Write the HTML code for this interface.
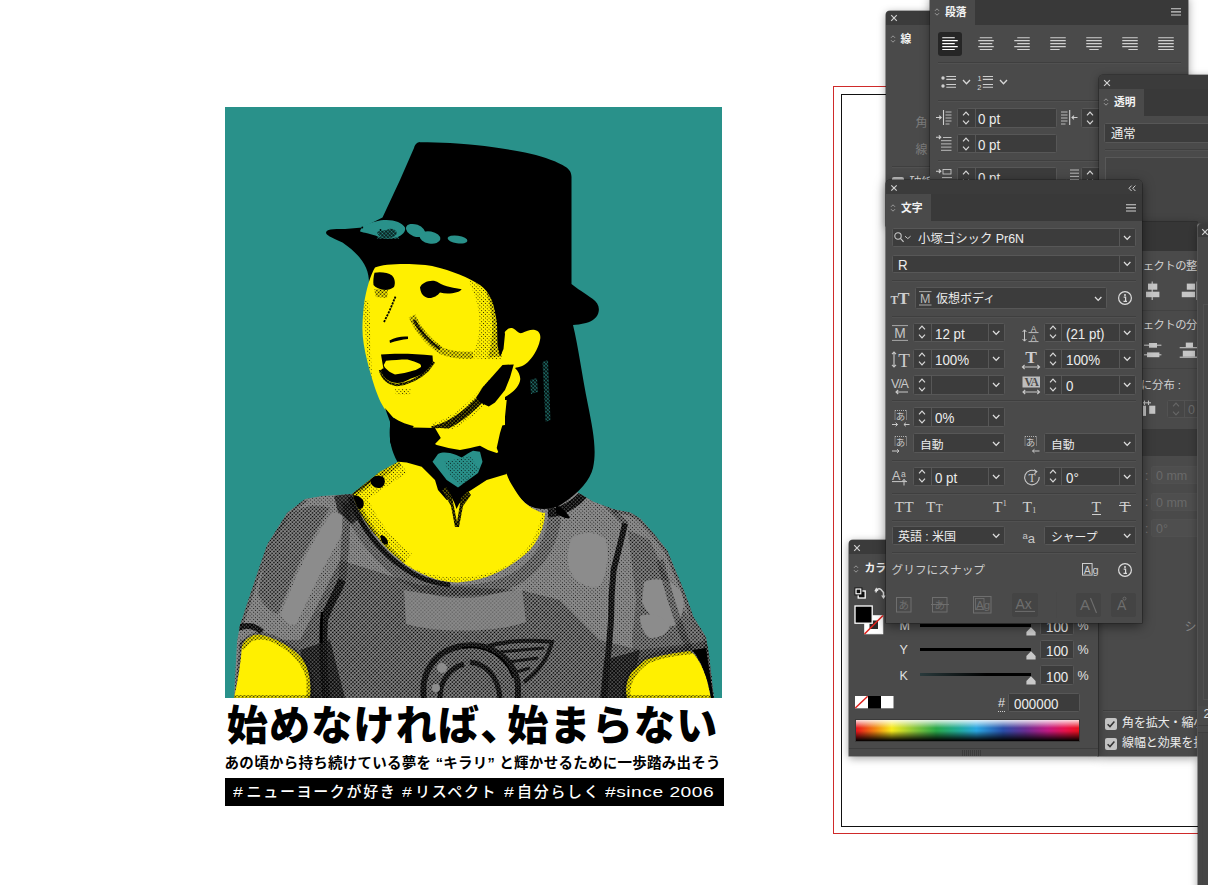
<!DOCTYPE html>
<html lang="ja"><head><meta charset="utf-8"><title>始めなければ、始まらない</title>
<style>
*{box-sizing:border-box}
html,body{margin:0;padding:0}
body{width:1208px;height:885px;position:relative;overflow:hidden;background:#fff;font-family:"Liberation Sans","Noto Sans CJK JP",sans-serif;color:#e4e4e4;font-size:12px;line-height:1}
.a{position:absolute}
.panel{position:absolute;background:#4a4a4a;overflow:hidden}
svg{position:absolute;overflow:visible}
.tg{top:778px;height:28px;font:500 15px/27.5px 'Liberation Sans','Noto Sans CJK JP',sans-serif;color:#fff;white-space:pre;letter-spacing:1.65px}
.hs{display:inline-block;width:13.2px;transform:scaleX(1.18);transform-origin:left center;letter-spacing:0}
</style></head><body>
<!-- ===== poster ===== -->
<svg class="a" style="left:0;top:0" width="1208" height="885" viewBox="0 0 1208 885">
<defs>
<pattern id="h0" width="2.6" height="2.6" patternUnits="userSpaceOnUse" patternTransform="rotate(45)"><circle cx="1.3" cy="1.3" r="0.45" fill="#000"/></pattern>
<pattern id="h1" width="2.6" height="2.6" patternUnits="userSpaceOnUse" patternTransform="rotate(45)"><circle cx="1.3" cy="1.3" r="0.54" fill="#000"/></pattern>
<pattern id="h2" width="2.6" height="2.6" patternUnits="userSpaceOnUse" patternTransform="rotate(45)"><circle cx="1.3" cy="1.3" r="0.78" fill="#000"/></pattern>
<pattern id="h3" width="2.6" height="2.6" patternUnits="userSpaceOnUse" patternTransform="rotate(45)"><rect width="2.6" height="2.6" fill="#000"/><circle cx="0" cy="0" r="0.62" fill="#fff000"/><circle cx="2.6" cy="0" r="0.62" fill="#fff000"/><circle cx="0" cy="2.6" r="0.62" fill="#fff000"/><circle cx="2.6" cy="2.6" r="0.62" fill="#fff000"/></pattern>
<pattern id="g3" width="2.6" height="2.6" patternUnits="userSpaceOnUse" patternTransform="rotate(45)"><rect width="2.6" height="2.6" fill="#000"/><circle cx="0" cy="0" r="0.7" fill="#8c8c8c"/><circle cx="2.6" cy="0" r="0.7" fill="#8c8c8c"/><circle cx="0" cy="2.6" r="0.7" fill="#8c8c8c"/><circle cx="2.6" cy="2.6" r="0.7" fill="#8c8c8c"/></pattern>
<pattern id="t2" width="2.6" height="2.6" patternUnits="userSpaceOnUse" patternTransform="rotate(45)"><circle cx="1.3" cy="1.3" r="0.95" fill="#29918a"/></pattern>
<clipPath id="cp"><rect x="225" y="107" width="497" height="591"/></clipPath>
<clipPath id="shirtclip"><path id="shirtp" d="M352,494 L322,496 L305,499 L287,513 L267,545 L255,580 L240,625 L237,642 L234,698 L714,698 L709,655 L706,637 L693.5,617 L688.9,603.8 L683.9,590.4 L675.5,570.3 L667.2,550.3 L653.8,533.5 L640.4,518.5 L630.4,512.6 L613.6,509.3 L593.6,501.8 L573.5,490 L540,478 L500,478 Z"/></clipPath>
<clipPath id="faceclip"><path id="facep" d="M375,267.5 C385,263 420,263 435,266.7 C450,270 470,278 480,285 C490,292 495,305 497,322 L500,340 C503,333 508,327 512,328 C516,329 518,334 522,333 C527,331 531,329 535,330 C540,331 541,336 540,340 C538,350 532,358 528,362 C524,366 519,367 515,368 C519,372 521,377 520,381 C518,388 512,393 505,397 L505,425 L470,430 L440,428 C430,429 424,428 417.5,427 C408,425 400,422 392.5,417 C386,412 381,404 378,396 C374,386 370,372 367.5,362 C364,348 362,336 362.5,325 C363,312 364,303 365,298 C367,288 370,276 375,267.5 Z"/></clipPath>
<clipPath id="chestclip"><path id="chestp" d="M398.3,461.7 L380,471.7 L352.5,493.7 C354,500 357,506 360,512.5 C366,523 372,532 380,540 C386,548 392,554 400,560 C408,567 416,571 425,575 C436,580 446,582 457.5,582.5 L470,581 C482,579 493,575 502.5,570 C513,564 523,557 530,550 C536,543 540,535 542.5,527.5 C544,522 545,517 545,512.5 L543,513 C536,511 530,507 525,503 C520,498 516,492 513,486.7 C510,482 508,478 506.7,474 L496.7,448 L500,433 L505,416.7 L506.7,400 L440,400 L413,427 Z"/></clipPath>
</defs>
<rect x="225" y="107" width="497" height="591" fill="#29918a"/>
<g clip-path="url(#cp)">
<!-- shirt -->
<use href="#shirtp" fill="#8a8a8a"/>
<g clip-path="url(#shirtclip)" id="shirtshade">
<rect x="225" y="480" width="497" height="220" fill="url(#h1)"/>
<!-- medium zones -->
<path fill="url(#h2)" d="M340,560 L420,585 L520,590 L560,600 L600,640 L640,650 L716,640 L716,698 L234,698 L240,640 L300,640 Z"/>

<path fill="url(#h2)" d="M628,530 L650,540 L668,580 L690,620 L712,650 L716,698 L640,698 L632,640 L636,600 Z" opacity=".8"/>
<path fill="url(#h2)" d="M284,520 C294,508 312,502 330,508 C320,524 308,546 298,566 C290,584 284,600 278,614 C270,612 262,604 258,594 C262,566 270,540 284,520 Z" opacity=".85"/>
<path fill="url(#g3)" d="M334,496 L352,493 L362,516 L352,524 L338,512 Z" opacity=".75"/>
<!-- highlights -->
<path fill="#8c8c8c" d="M332,513 C338,512 345,516 347,522 C342,536 332,552 323,568 C314,586 305,606 296,624 C290,626 283,621 281,614 C288,596 296,576 305,558 C313,542 322,526 332,513 Z"/>

<path fill="#8c8c8c" d="M572,538 C584,530 598,532 606,540 C609,556 607,574 600,586 C588,590 574,582 569,568 C567,556 568,546 572,538 Z"/>
<path fill="#8c8c8c" d="M644,582 C656,576 672,580 682,592 C686,606 682,620 674,626 C660,626 648,616 642,602 Z"/>
<path fill="#8c8c8c" d="M640,616 C652,612 664,616 670,626 C668,634 660,638 650,638 C644,634 640,626 640,616 Z"/>
<path fill="#8e8e8e" d="M404,590 C440,598 490,598 522,588 L526,622 C500,632 440,634 406,624 Z" opacity=".72"/>
<!-- collar band -->
<path fill="none" stroke="url(#g3)" stroke-width="5" d="M350,497 C360,526 380,552 404,568 C416,577 432,583 450,585"/>
<path fill="none" opacity=".8" stroke="url(#h2)" stroke-width="13" d="M346,500 C358,530 378,556 402,574 C430,596 486,598 520,576 C540,562 552,542 555,516"/>
<!-- folds -->
<path fill="none" stroke="url(#h2)" stroke-width="8" d="M347,503 C346,530 345,560 342,580"/><path fill="none" stroke="url(#g3)" stroke-width="8" d="M342,580 C336,596 328,606 324,620 C322,650 324,676 326,698"/>
<path fill="none" stroke="#000" stroke-width="2.5" d="M322,612 C320,640 322,670 324,698"/>
<path fill="none" stroke="url(#g3)" stroke-width="6" d="M625,523.5 C622,538 617,556 613.6,570 C611.5,590 611,606 611,620 C609,650 606,676 604,698"/>
<path fill="none" stroke="url(#h2)" stroke-width="6" d="M600,498 L626,524"/>
<path fill="none" stroke="url(#h2)" stroke-width="7" d="M660,560 C668,590 676,620 690,650"/>
<path fill="none" stroke="url(#g3)" stroke-width="6" d="M238,628 C246,624 256,626 262,632"/>
<path fill="none" stroke="url(#h2)" stroke-width="6" d="M305,499 L287,513 L267,545 L255,580 L240,625"/>
<path fill="none" stroke="url(#h2)" stroke-width="6" d="M613.6,509.3 L630.4,512.6 L640.4,518.5 L653.8,533.5 L667.2,550.3 L675.5,570.3 L683.9,590.4 L692,617 L706,637 L709,655"/>
<path fill="url(#g3)" d="M300,650 L330,640 L345,698 L310,698 Z" opacity=".8"/>
<path fill="url(#g3)" d="M604,660 L640,650 L630,698 L600,698 Z" opacity=".8"/>
<!-- print -->
<path fill="none" stroke="url(#g3)" stroke-width="6" d="M424,698 C420,672 436,650 462,646 C490,642 514,658 518,684 L518,698"/>
<path fill="none" stroke="#000" stroke-width="1.6" d="M462,648 C484,644 506,656 513,678"/>
<path fill="none" stroke="url(#g3)" stroke-width="5" d="M440,698 C440,680 450,668 464,664 M470,662 C486,664 498,676 500,698"/>
<circle cx="442" cy="668" r="5" fill="#8c8c8c"/><circle cx="436" cy="688" r="4" fill="#8c8c8c"/>
<path fill="none" stroke="url(#g3)" stroke-width="4" d="M488,646 C510,640 532,640 552,642 C548,658 538,672 524,682"/>
<path fill="none" stroke="url(#g3)" stroke-width="3" d="M500,652 L544,648 M508,662 L538,658 M516,672 L530,668"/>
<path fill="none" stroke="url(#g3)" stroke-width="9" d="M548,513 C560,513 574,505 584,494"/>
</g>
<path fill="#000" d="M556,505 C562,508 567,512 570,518 C566,519 561,517 556,513 Z"/>
<!-- hat + hair -->
<path id="hathair" fill="#000" d="M420,142.3 C440,142.5 462,143.5 475,145 C495,147 512,150 525,152.5 C540,155.5 553,160 562.5,165 C568,168 571.5,171 571.5,177 L571.5,284 C576,288 586,294 592.5,298.75 C597,302 599.5,306 598.75,311 C598,317 593,321 586,323 C581,324.3 576,324.8 573,325 C578,345 582,375 588,405 C593,430 597,450 593,468 C590,480 580,492 562,504 C552,510 538,511 528,505 C518,498 510,485 505,472 L470,485 L420,470 L397.5,462 C388,445 389,430 391,420 L420,400 L400,300 L369,283 C369,268 362,256 342.5,242.5 C335,239 327,236 326,233 C326,229 332,229 345,229 L362.5,227.5 L382.5,217.5 L400,180 L414,148 C415,144 417,142.5 420,142 Z"/>
<!-- yellow skin -->
<use href="#chestp" fill="#fff000"/>
<use href="#facep" fill="#fff000"/>
<path id="larm" fill="#fff000" d="M242,645 C248,636 256,633 262,635 C275,638 290,646 300,656 C308,665 312,680 310,698 L234,698 C238,680 241,662 242,645 Z"/>
<path id="rarm" fill="#fff000" d="M645,660 C660,655 680,652 690,651 C697,655 703,668 707,680 L711,698 L627,698 C625,690 626,680 632,672 Z"/>
<path fill="#000" d="M692,650 L706,648 L713.5,698 L711,698 C708,678 701,660 692,650 Z"/>
<!-- face shading (halftone) -->
<g clip-path="url(#faceclip)">
<path fill="url(#h1)" d="M468,280 L500,290 L502,360 L470,358 C482,340 484,310 468,280 Z"/>
<path fill="url(#h2)" d="M486,292 L500,296 L502,356 L488,358 C494,336 494,314 486,292 Z"/>
<path fill="none" stroke="url(#h2)" stroke-width="7" d="M412,316 C418,330 428,342 442,351 C452,355 462,356 473,355"/>
<path fill="none" stroke="url(#h3)" stroke-width="3" d="M414,320 C420,332 428,341 440,349"/>
<path fill="none" stroke="url(#h3)" stroke-width="7.5" d="M432,430 C450,427 470,413 494,384"/>
<path fill="none" stroke="url(#h1)" stroke-width="13" d="M432,430 C450,427 470,413 494,384"/>
<path fill="url(#h2)" d="M374,289 L388,290 L387,298 L376,297 Z"/>
<path fill="url(#h1)" d="M395,389 L411,389 L410,395 L396,395 Z"/>
<path fill="url(#h1)" d="M362,300 L369,300 L372,380 L380,402 L372,402 Z"/>
</g>
<!-- face features -->
<path fill="#000" d="M374.5,272.8 C380,271.5 388,272.5 392,275.5 C395,278.5 395.5,283 394,287 C391,289.5 387,290.3 383,289.8 C379,289 375.5,287.5 373.5,285 C373,281 373.5,277 374.5,272.8 Z"/>
<path fill="none" stroke="#000" stroke-width="1.8" stroke-dasharray="2.2 1" d="M395.5,296.7 C393,302 391,308 388,314 L384,322"/>
<path fill="#000" d="M420,287.5 C421.7,281.7 433.3,278.3 438.3,282.5 C445,286.7 455,288.3 461.7,289.2 C460,292.5 448.3,295 440,292.5 C436.7,296.7 430,300 425,296.7 C422,295 420.5,292 420,287.5 Z"/>
<path fill="#000" d="M389.5,340.5 C395,337 402,336 408,336.5 L408,339 C402,339.5 396,341 390,343 Z"/>
<path fill="#000" fill-rule="evenodd" d="M381,354.5 C395,353 415,353.5 432.5,355.5 L433,362.5 C431,366 429,369 426,371.5 C421,375 416,377 411,378.5 C406,381 402,383 397,383 C392,383 388,380.5 384.5,377.5 C382,375.5 380.5,373 381,370.5 C381.5,369 382.5,368.5 383.5,368.5 C382.5,364 382,360 381,354.5 Z M386,360.8 C393,360 400,359.4 407.5,359.4 C412,360.5 416.5,362 420,364 C421,365 421.2,366 421,367 C419,368.5 416.5,369.8 413.75,370.6 C408,372.5 401,374 395,374.4 C392,373.5 389.5,372 387.5,370 C385.5,368.5 384.3,367 383.75,365 Z"/>
<path fill="none" stroke="url(#h3)" stroke-width="2.5" d="M380,370 C382,378 388,384 397,385 C408,384 420,378 428,370 L434,362"/>
<!-- gap between cheek and ear -->
<path fill="#000" d="M492,296 L500,310 L505,334 L503.5,349 L500,357 L497.5,345 L497,322 Z"/>
<!-- chin strap -->
<path fill="#000" d="M502.5,365 L513.75,364.4 L510,377.5 L505,390 L495,402.5 L488.75,406.5 L480,402.5 L476.25,397.5 L482.5,387.5 L492.5,376.25 Z"/>
<!-- neck shadow + band + drip -->
<path fill="#000" d="M385,408 L396.7,421.7 L413,427.5 L435,428 L440.8,438 L435,444 L436.7,445 C445,447 452,449 460,450 C467,449 474,447 480,445.8 L488,450 L496.7,453 L506.7,448 L506.7,474 L486.7,480 L466.7,493 L463,499 L459,504 L456.5,509 L454.5,503 L452,498 L446.7,500 L438,490 L435,480 L421.7,466.7 L406.7,462.5 L398.3,461.7 L390,441.7 L390,421.7 Z"/>
<path fill="url(#h3)" d="M442,490 L446,487 L452,497 L457,522 L461,498 L468,491 L471,495 L463,506 L459,527 L455,527 L451,506 Z"/>
<!-- scarf -->
<path fill="#29918a" d="M432.5,461.7 L438,454 C442,452 446,452.5 450,453 C455,454 458,456 461.7,457.5 C466,455 470,452 473,450.8 L480,451.7 L482.5,461.7 L478,473 L458,487.5 L446.7,480 Z"/>
<path fill="url(#h1)" d="M444,462 L470,456 L480,470 L462,485 L452,478 Z"/>
<!-- chest / shoulder shading -->
<g clip-path="url(#chestclip)">
<path fill="none" stroke="url(#h1)" stroke-width="26" d="M400,462 L352,494 C362,522 380,546 404,564"/>
<path fill="none" stroke="url(#h2)" stroke-width="12" d="M398,460 L350,493 C360,522 378,546 402,566"/>
<path fill="none" stroke="url(#h3)" stroke-width="5" d="M372,478 L350,494 C356,510 364,524 374,536"/>
<path fill="#000" d="M371,479 C374,475 381,475 384,478 C386,482 384,487 380,488 C375,488 372,486 371,483 Z"/>
<path fill="#000" d="M350,496 C354,494 360,496 363,500 C365,505 363,509 359,509 C355,507 351,502 350,496 Z"/>
<path fill="#000" d="M381,535 C384,535 388,539 388,543 C387,545.5 384,545 382,542 C380.5,539.5 380.3,537 381,535 Z"/>
<path fill="none" stroke="url(#h1)" stroke-width="6" d="M404,566 C430,584 480,586 512,566 C530,554 540,538 545,514"/>
</g>
<!-- arm shading -->
<g clip-path="url(#cp)">
<path fill="none" stroke="url(#h2)" stroke-width="7" d="M241,648 C250,634 262,633 276,640 C292,648 306,660 310,680 L310,698"/>
<path fill="none" stroke="url(#h2)" stroke-width="8" d="M627,698 C624,686 630,672 646,660 C660,654 680,651 692,650"/>
<path fill="none" stroke="url(#h2)" stroke-width="4" d="M234,697 L320,697 M622,697 L712,697"/>
</g>
<!-- teal details -->
<path fill="#29918a" d="M360,231.2 C361,226.5 369,222.5 381,220.3 C392,218.8 402,222 405,227.5 C406,231.5 402.5,235.5 396,237.5 C390,239.3 384,238.6 379,236.8 C374,235.2 369,233.6 365,232.8 C362.5,232.3 361,231.8 360,231.2 Z"/>
<path fill="#000" d="M377,232 C381,230 386,231 389,229 C393,228 396,230 397,233 C396,236.5 391,238.5 386,238.3 C382,238 378,236 377,232 Z" opacity=".85"/>
<path fill="url(#t2)" d="M376,229 L398,227 L399,239 L377,239 Z"/>
<circle cx="362.3" cy="227.5" r="0.9" fill="#000"/><circle cx="380.5" cy="230" r="0.9" fill="#000"/>
<ellipse cx="415.5" cy="230.5" rx="10" ry="6" fill="#29918a" transform="rotate(20 415.5 230.5)"/>
<ellipse cx="430" cy="237.5" rx="10.5" ry="6" fill="#29918a" transform="rotate(10 430 237.5)"/>
<ellipse cx="457.5" cy="239.5" rx="10" ry="3.8" fill="#29918a" transform="rotate(8 457.5 239.5)"/>
<path fill="url(#t2)" d="M542.5,362 L548,360 L550.5,420 L545.5,422 Z"/>
<path fill="url(#t2)" d="M530,380 L537,378 L538,392 L531,394 Z"/>
</g>
</svg>
<div class="a" style="left:226.8px;top:696px;width:520px;height:60px;font:900 41px/60px 'Liberation Sans','Noto Sans CJK JP',sans-serif;color:#000;white-space:nowrap;letter-spacing:1.24px" id="ttl">始めなければ<span style="letter-spacing:-14px">、</span>始まらない</div>
<div class="a" style="left:224.6px;top:751.2px;width:520px;height:24px;font:700 14.5px/24px 'Liberation Sans','Noto Sans CJK JP',sans-serif;color:#000;white-space:nowrap;letter-spacing:0.27px" id="sub">あの頃から持ち続けている夢を “キラリ” と輝かせるために一歩踏み出そう</div>
<div class="a" style="left:225px;top:778px;width:498.5px;height:27.8px;background:#000"></div>
<div class="a tg" style="left:233.4px" id="tags"><span class="hs">#</span>ニューヨークが好き</div>
<div class="a tg" style="left:401.8px"><span class="hs">#</span>リスペクト</div>
<div class="a tg" style="left:503.9px"><span class="hs">#</span>自分らしく</div>
<div class="a tg" style="left:604.5px;letter-spacing:0.4px"><span style="display:inline-block;transform:scaleX(1.28);transform-origin:left center">#since 2006</span></div>
<!-- ===== panels ===== -->
<div class="a" style="left:833px;top:86px;width:420px;height:748px;border:1px solid #cf2a2a"></div>
<div class="a" style="left:841px;top:94px;width:420px;height:733px;border:1px solid #111"></div>
<div class="panel" style="left:885.5px;top:11px;width:60px;height:215px;box-shadow:0 0 0 0.6px rgba(25,25,25,.6),0 2px 9px rgba(0,0,0,.4);border-radius:4px 0 0 0;">
<div class="a" style="left:0.0px;top:0px;width:60.0px;height:14px;background:#3b3b3b;"></div>
<svg style="left:4.5px;top:3.3px" width="8" height="8" viewBox="0 0 8 8" ><path d="M1.2000000000000002,1.2000000000000002L6.8,6.8M6.8,1.2000000000000002L1.2000000000000002,6.8" stroke="#cfcfcf" stroke-width="1.2" fill="none"/></svg>
<svg style="left:4.7px;top:23.3px" width="6" height="10" viewBox="0 0 6 10" ><path d="M1,3.8L3,1.8L5,3.8M1,6.2L3,8.2L5,6.2" stroke="#9a9a9a" stroke-width="1" fill="none"/></svg>
<div class="a" style="left:15.0px;top:21.5px;font-size:10.8px;line-height:12.96px;color:#f2f2f2;font-weight:700;white-space:nowrap;">線</div>
<div class="a" style="left:30.0px;top:104.5px;font-size:12px;line-height:14.4px;color:#7d7d7d;font-weight:400;white-space:nowrap;">角</div>
<div class="a" style="left:30.0px;top:132px;font-size:12px;line-height:14.4px;color:#7d7d7d;font-weight:400;white-space:nowrap;">線</div>
<div class="a" style="left:6.0px;top:155px;width:53.5px;height:1px;background:#3f3f3f"></div>
<div class="a" style="left:6.0px;top:156px;width:53.5px;height:1px;background:#515151"></div>
<div class="a" style="left:6.3px;top:166px;width:12.0px;height:12px;background:#bdbdbd;border-radius:2px"></div>
<div class="a" style="left:24.0px;top:164.8px;font-size:12px;line-height:14.4px;color:#e8e8e8;font-weight:400;white-space:nowrap;">破線</div>
</div>
<div class="panel" style="left:929.5px;top:-4px;width:258.5px;height:230px;box-shadow:0 0 0 0.6px rgba(25,25,25,.6),0 2px 9px rgba(0,0,0,.4);">
<div class="a" style="left:0.0px;top:0px;width:258.5px;height:29px;background:#393939;"></div>
<div class="a" style="left:0.0px;top:0px;width:45.0px;height:29px;background:#4a4a4a;"></div>
<svg style="left:4.7px;top:11.3px" width="6" height="10" viewBox="0 0 6 10" ><path d="M1,3.8L3,1.8L5,3.8M1,6.2L3,8.2L5,6.2" stroke="#9a9a9a" stroke-width="1" fill="none"/></svg>
<div class="a" style="left:15.5px;top:9.5px;font-size:10.8px;line-height:12.96px;color:#f2f2f2;font-weight:700;white-space:nowrap;">段落</div>
<svg style="left:241.5px;top:12px" width="10" height="8" viewBox="0 0 10 8" ><path d="M0,0.8H10M0,3.9H10M0,7H10" stroke="#cfcfcf" stroke-width="1.1" fill="none"/></svg>
<div class="a" style="left:8.5px;top:36px;width:24px;height:23.7px;background:#262626;border-radius:3px"></div>
<svg style="left:10.9px;top:39px" width="20" height="18" viewBox="0 0 20 18" ><path d="M2.25,2.7H14.75M2.25,5.65H17.75M2.25,8.6H14.75M2.25,11.55H17.75M2.25,14.5H14.75" stroke="#ffffff" stroke-width="1.15" fill="none"/></svg>
<svg style="left:46.5px;top:39px" width="20" height="18" viewBox="0 0 20 18" ><path d="M3.75,2.7H16.25M2.25,5.65H17.75M3.75,8.6H16.25M2.25,11.55H17.75M3.75,14.5H16.25" stroke="#d0d0d0" stroke-width="1.15" fill="none"/></svg>
<svg style="left:82.3px;top:39px" width="20" height="18" viewBox="0 0 20 18" ><path d="M5.25,2.7H17.75M2.25,5.65H17.75M5.25,8.6H17.75M2.25,11.55H17.75M5.25,14.5H17.75" stroke="#d0d0d0" stroke-width="1.15" fill="none"/></svg>
<svg style="left:118.5px;top:39px" width="20" height="18" viewBox="0 0 20 18" ><path d="M2.25,2.7H17.75M2.25,5.65H17.75M2.25,8.6H17.75M2.25,11.55H17.75M2.25,14.5H11.62" stroke="#d0d0d0" stroke-width="1.15" fill="none"/></svg>
<svg style="left:154.5px;top:39px" width="20" height="18" viewBox="0 0 20 18" ><path d="M2.25,2.7H17.75M2.25,5.65H17.75M2.25,8.6H17.75M2.25,11.55H17.75M5.31,14.5H14.69" stroke="#d0d0d0" stroke-width="1.15" fill="none"/></svg>
<svg style="left:190.5px;top:39px" width="20" height="18" viewBox="0 0 20 18" ><path d="M2.25,2.7H17.75M2.25,5.65H17.75M2.25,8.6H17.75M2.25,11.55H17.75M8.38,14.5H17.75" stroke="#d0d0d0" stroke-width="1.15" fill="none"/></svg>
<svg style="left:226.5px;top:39px" width="20" height="18" viewBox="0 0 20 18" ><path d="M2.25,2.7H17.75M2.25,5.65H17.75M2.25,8.6H17.75M2.25,11.55H17.75M2.25,14.5H17.75" stroke="#d0d0d0" stroke-width="1.15" fill="none"/></svg>
<div class="a" style="left:8.5px;top:66px;width:243px;height:1px;background:#3f3f3f"></div>
<div class="a" style="left:8.5px;top:67px;width:243px;height:1px;background:#515151"></div>
<svg style="left:10.5px;top:78px" width="18" height="16" viewBox="0 0 18 16" ><circle cx="3" cy="4" r="1.7" fill="#cfcfcf"/><circle cx="3" cy="12" r="1.7" fill="#cfcfcf"/><path d="M6.3,2.5H16M6.3,5.4H16M6.3,10.5H16M6.3,13.3H16" stroke="#cfcfcf" stroke-width="1.1" fill="none"/></svg>
<svg style="left:32.6px;top:83.1px" width="9" height="5.8" viewBox="0 0 9 5.8" ><path d="M1,1L4.5,4.8L8,1" stroke="#d8d8d8" stroke-width="1.3" fill="none"/></svg>
<svg style="left:47.5px;top:77px" width="18" height="18" viewBox="0 0 18 18" ><text x="0.6" y="8.3" font-size="7.5" fill="#d8d8d8" font-family="Liberation Sans,sans-serif">1</text><text x="0.2" y="16.6" font-size="7.5" fill="#d8d8d8" font-family="Liberation Sans,sans-serif">2</text><path d="M5.8,3.5H16M5.8,6.4H16M5.8,11.5H16M5.8,14.3H16" stroke="#cfcfcf" stroke-width="1.1" fill="none"/></svg>
<svg style="left:69.6px;top:83.1px" width="9" height="5.8" viewBox="0 0 9 5.8" ><path d="M1,1L4.5,4.8L8,1" stroke="#d8d8d8" stroke-width="1.3" fill="none"/></svg>
<div class="a" style="left:8.5px;top:104px;width:243px;height:1px;background:#3f3f3f"></div>
<div class="a" style="left:8.5px;top:105px;width:243px;height:1px;background:#515151"></div>
<svg style="left:6.5px;top:113.5px" width="18" height="17" viewBox="0 0 18 17" ><path d="M0,7.5H5M3.2,5.6L5.2,7.5L3.2,9.4" stroke="#d0d0d0" stroke-width="1.1" fill="none"/><path d="M7.5,0V15" stroke="#d0d0d0" stroke-width="1.1"/><path d="M9.5,2H15.5M9.5,5H15.5M9.5,8H15.5M9.5,11H15.5M9.5,14H13.5" stroke="#d0d0d0" stroke-width="0.85" fill="none"/></svg>
<div class="a" style="left:27.25px;top:112px;width:100.0px;height:19.5px;background:#3c3c3c;border:1px solid #575757;border-radius:1.5px"></div>
<div class="a" style="left:45.0px;top:113px;width:1.0px;height:17.5px;background:#575757;"></div>
<svg style="left:32.42px;top:114.75px" width="8" height="14" viewBox="0 0 8 14" ><path d="M1,4.3L4,1.1L7,4.3M1,9.7L4,12.9L7,9.7" stroke="#d8d8d8" stroke-width="1.2" fill="none"/></svg>
<div class="a" style="left:48.5px;top:115.43px;font-size:14.2px;line-height:17.04px;color:#ececec;font-weight:400;white-space:nowrap;transform:scaleX(0.94);transform-origin:left center">0 pt</div>
<svg style="left:131.0px;top:113.5px" width="18" height="17" viewBox="0 0 18 17" ><path d="M0,2H6.5M0,5H6.5M0,8H6.5M0,11H6.5M0,14H4.5" stroke="#d0d0d0" stroke-width="0.85" fill="none"/><path d="M8.7,0V15" stroke="#d0d0d0" stroke-width="1.1"/><path d="M16.5,7.5H11.2M13,5.6L11,7.5L13,9.4" stroke="#d0d0d0" stroke-width="1.1" fill="none"/></svg>
<div class="a" style="left:151.5px;top:112px;width:100px;height:19.5px;background:#3c3c3c;border:1px solid #575757;border-radius:1.5px"></div>
<div class="a" style="left:169.0px;top:113px;width:1.0px;height:17.5px;background:#575757;"></div>
<svg style="left:156.55px;top:114.75px" width="8" height="14" viewBox="0 0 8 14" ><path d="M1,4.3L4,1.1L7,4.3M1,9.7L4,12.9L7,9.7" stroke="#d8d8d8" stroke-width="1.2" fill="none"/></svg>
<div class="a" style="left:172.5px;top:115.43px;font-size:14.2px;line-height:17.04px;color:#ececec;font-weight:400;white-space:nowrap;transform:scaleX(0.94);transform-origin:left center">0 pt</div>
<svg style="left:6.5px;top:138.5px" width="18" height="17" viewBox="0 0 18 17" ><path d="M0,2.2H4.6M2.9,0.4L4.8,2.2L2.9,4" stroke="#d0d0d0" stroke-width="1.1" fill="none"/><path d="M7,2.5H15.5M5,5.7H15.5M5,8.9H15.5M5,12.1H15.5M5,15.3H15.5" stroke="#d0d0d0" stroke-width="0.85" fill="none"/></svg>
<div class="a" style="left:27.25px;top:138px;width:100.0px;height:19px;background:#3c3c3c;border:1px solid #575757;border-radius:1.5px"></div>
<div class="a" style="left:45.0px;top:139px;width:1.0px;height:17px;background:#575757;"></div>
<svg style="left:32.42px;top:140.5px" width="8" height="14" viewBox="0 0 8 14" ><path d="M1,4.3L4,1.1L7,4.3M1,9.7L4,12.9L7,9.7" stroke="#d8d8d8" stroke-width="1.2" fill="none"/></svg>
<div class="a" style="left:48.5px;top:141.18px;font-size:14.2px;line-height:17.04px;color:#ececec;font-weight:400;white-space:nowrap;transform:scaleX(0.94);transform-origin:left center">0 pt</div>
<div class="a" style="left:8.5px;top:164px;width:243px;height:1px;background:#3f3f3f"></div>
<div class="a" style="left:8.5px;top:165px;width:243px;height:1px;background:#515151"></div>
<svg style="left:6.5px;top:172.5px" width="18" height="17" viewBox="0 0 18 17" ><path d="M0,2.2H4.6M2.9,0.4L4.8,2.2L2.9,4" stroke="#d0d0d0" stroke-width="1.1" fill="none"/><rect x="7" y="0.5" width="8" height="4.5" stroke="#d0d0d0" stroke-width="0.85" fill="none"/><path d="M6,8.6H16M6,11.8H16M6,15H16" stroke="#d0d0d0" stroke-width="0.85" fill="none"/></svg>
<div class="a" style="left:27.25px;top:171px;width:100.0px;height:19.5px;background:#3c3c3c;border:1px solid #575757;border-radius:1.5px"></div>
<div class="a" style="left:45.0px;top:172px;width:1.0px;height:17.5px;background:#575757;"></div>
<svg style="left:32.42px;top:173.75px" width="8" height="14" viewBox="0 0 8 14" ><path d="M1,4.3L4,1.1L7,4.3M1,9.7L4,12.9L7,9.7" stroke="#d8d8d8" stroke-width="1.2" fill="none"/></svg>
<div class="a" style="left:48.5px;top:174.43px;font-size:14.2px;line-height:17.04px;color:#ececec;font-weight:400;white-space:nowrap;transform:scaleX(0.94);transform-origin:left center">0 pt</div>
<svg style="left:133.0px;top:172.5px" width="18" height="17" viewBox="0 0 18 17" ><path d="M7,1H16M7,4.2H16M7,7.4H16" stroke="#d0d0d0" stroke-width="0.85" fill="none"/><rect x="7.5" y="10.5" width="8" height="4.5" stroke="#d0d0d0" stroke-width="0.85" fill="none"/><path d="M0,13H4.6M2.9,11.2L4.8,13L2.9,14.8" stroke="#d0d0d0" stroke-width="1.1" fill="none"/></svg>
<div class="a" style="left:151.5px;top:171px;width:100px;height:19.5px;background:#3c3c3c;border:1px solid #575757;border-radius:1.5px"></div>
<div class="a" style="left:169.0px;top:172px;width:1.0px;height:17.5px;background:#575757;"></div>
<svg style="left:156.55px;top:173.75px" width="8" height="14" viewBox="0 0 8 14" ><path d="M1,4.3L4,1.1L7,4.3M1,9.7L4,12.9L7,9.7" stroke="#d8d8d8" stroke-width="1.2" fill="none"/></svg>
<div class="a" style="left:172.5px;top:174.43px;font-size:14.2px;line-height:17.04px;color:#ececec;font-weight:400;white-space:nowrap;transform:scaleX(0.94);transform-origin:left center">0 pt</div>
</div>
<div class="panel" style="left:1099px;top:75px;width:125px;height:149px;box-shadow:0 0 0 0.6px rgba(25,25,25,.6),0 2px 9px rgba(0,0,0,.4);border-radius:4px 0 0 0;">
<div class="a" style="left:0px;top:0px;width:125px;height:14px;background:#3b3b3b;"></div>
<svg style="left:4.3px;top:3.7px" width="8" height="8" viewBox="0 0 8 8" ><path d="M1.1,1.1L6.9,6.9M6.9,1.1L1.1,6.9" stroke="#cfcfcf" stroke-width="1.2" fill="none"/></svg>
<div class="a" style="left:0px;top:14px;width:125px;height:26.7px;background:#393939;"></div>
<div class="a" style="left:0px;top:14px;width:45px;height:26.7px;background:#4a4a4a;"></div>
<svg style="left:3.6px;top:21.8px" width="6" height="10" viewBox="0 0 6 10" ><path d="M1,3.8L3,1.8L5,3.8M1,6.2L3,8.2L5,6.2" stroke="#9a9a9a" stroke-width="1" fill="none"/></svg>
<div class="a" style="left:15.0px;top:20.8px;font-size:10.8px;line-height:12.96px;color:#f2f2f2;font-weight:700;white-space:nowrap;">透明</div>
<div class="a" style="left:5px;top:47.5px;width:126px;height:20.0px;background:#3c3c3c;border:1px solid #575757;border-radius:1.5px"></div>
<div class="a" style="left:12px;top:51.72px;font-size:12.3px;line-height:14.76px;color:#ececec;font-weight:400;white-space:nowrap;">通常</div>
<div class="a" style="left:5.75px;top:73.5px;width:125.25px;height:1px;background:#3f3f3f"></div>
<div class="a" style="left:5.75px;top:74.5px;width:125.25px;height:1px;background:#515151"></div>
<div class="a" style="left:5.75px;top:82px;width:125.25px;height:67px;background:#444444;border:1px solid #585858"></div>
</div>
<div class="panel" style="left:1097.5px;top:222px;width:99.5px;height:534px;box-shadow:0 0 0 0.6px rgba(25,25,25,.6),0 2px 9px rgba(0,0,0,.4);">
<div class="a" style="left:0.0px;top:0px;width:99.5px;height:28.5px;background:#363636;"></div>
<div class="a" style="left:45.3px;top:37.5px;font-size:11.3px;line-height:13.56px;color:#d2d2d2;font-weight:400;white-space:nowrap;letter-spacing:-0.5px">ェクトの整列</div>
<svg style="left:42.5px;top:58px" width="70" height="140" viewBox="0 0 70 140" ><path d="M12.2,1.5L12.2,20" stroke="#c6c6c6" stroke-width="1.1"/><rect x="8" y="3.6" width="9.3" height="6.1" fill="#c6c6c6"/><rect x="6" y="11.7" width="13.4" height="5.5" fill="#c6c6c6"/><path d="M57,1.5L57,20" stroke="#c6c6c6" stroke-width="1.1"/><rect x="46.8" y="3.6" width="8.2" height="6.1" fill="#c6c6c6"/><rect x="41.75" y="11.7" width="13.25" height="5.5" fill="#c6c6c6"/><path d="M4,65.2L21.4,65.2" stroke="#c6c6c6" stroke-width="1.1"/><path d="M4,74.8L21.4,74.8" stroke="#c6c6c6" stroke-width="1.1"/><rect x="9" y="63" width="8" height="4.7" fill="#c6c6c6"/><rect x="7" y="72.4" width="12.4" height="4.8" fill="#c6c6c6"/><path d="M39.7,67.7L57.5,67.7" stroke="#c6c6c6" stroke-width="1.1"/><path d="M39.7,77.2L57.5,77.2" stroke="#c6c6c6" stroke-width="1.1"/><rect x="45.8" y="62.6" width="7.2" height="4.6" fill="#c6c6c6"/><rect x="42.8" y="70.7" width="12.2" height="6.0" fill="#c6c6c6"/><rect x="3" y="125.7" width="3" height="10.2" fill="#c6c6c6"/><rect x="9.2" y="125.7" width="6.1" height="8.1" fill="#c6c6c6"/><path d="M4.5,120.6L4.5,125" stroke="#c6c6c6" stroke-width="1.1"/><path d="M8.5,120.6L8.5,125" stroke="#c6c6c6" stroke-width="1.1"/><path d="M3,122.8L11,122.8" stroke="#c6c6c6" stroke-width="1.1"/></svg>
<div class="a" style="left:44.5px;top:88px;width:55px;height:1px;background:#424242;"></div>
<div class="a" style="left:45.3px;top:96.5px;font-size:11.3px;line-height:13.56px;color:#d2d2d2;font-weight:400;white-space:nowrap;letter-spacing:-0.5px">ェクトの分布</div>
<div class="a" style="left:44.5px;top:146px;width:55px;height:1px;background:#424242;"></div>
<div class="a" style="left:43.3px;top:156.5px;font-size:11.3px;line-height:13.56px;color:#d2d2d2;font-weight:400;white-space:nowrap;">に分布 :</div>
<div class="a" style="left:69.0px;top:177.6px;width:33.5px;height:18.4px;background:#464646;border:1px solid #525252;border-radius:1.5px"></div>
<div class="a" style="left:86.5px;top:178.6px;width:1px;height:16.4px;background:#525252;"></div>
<svg style="left:74.05px;top:179.8px" width="8" height="14" viewBox="0 0 8 14" ><path d="M1,4.3L4,1.1L7,4.3M1,9.7L4,12.9L7,9.7" stroke="#666666" stroke-width="1.2" fill="none"/></svg>
<div class="a" style="left:90.5px;top:181px;font-size:12.5px;line-height:15.0px;color:#6a6a6a;font-weight:400;white-space:nowrap;">0</div>
<div class="a" style="left:44.5px;top:206.5px;width:55px;height:27.5px;background:#3b3b3b;"></div>
<div class="a" style="left:47.5px;top:246.5px;font-size:12px;line-height:14.4px;color:#777;font-weight:400;white-space:nowrap;">:</div>
<div class="a" style="left:47.5px;top:273.0px;font-size:12px;line-height:14.4px;color:#777;font-weight:400;white-space:nowrap;">:</div>
<div class="a" style="left:47.5px;top:299.5px;font-size:12px;line-height:14.4px;color:#777;font-weight:400;white-space:nowrap;">:</div>
<div class="a" style="left:53.5px;top:244px;width:49px;height:18px;background:#4e4e4e;border:1px solid #505050;border-radius:1.5px"></div>
<div class="a" style="left:58.5px;top:247.1px;font-size:12.5px;line-height:15.0px;color:#696969;font-weight:400;white-space:nowrap;">0 mm</div>
<div class="a" style="left:53.5px;top:270.5px;width:49px;height:18.0px;background:#4e4e4e;border:1px solid #505050;border-radius:1.5px"></div>
<div class="a" style="left:58.5px;top:273.6px;font-size:12.5px;line-height:15.0px;color:#696969;font-weight:400;white-space:nowrap;">0 mm</div>
<div class="a" style="left:53.5px;top:297px;width:49px;height:18px;background:#4e4e4e;border:1px solid #505050;border-radius:1.5px"></div>
<div class="a" style="left:58.5px;top:300.1px;font-size:12.5px;line-height:15.0px;color:#696969;font-weight:400;white-space:nowrap;">0°</div>
<div class="a" style="left:87.0px;top:398px;font-size:12px;line-height:14.4px;color:#8a8a8a;font-weight:400;white-space:nowrap;">シ</div>
<div class="a" style="left:5.5px;top:487.5px;width:94px;height:1px;background:#3f3f3f"></div>
<div class="a" style="left:5.5px;top:488.5px;width:94px;height:1px;background:#515151"></div>
<div class="a" style="left:7.5px;top:496px;width:11.8px;height:11.5px;background:#c4c4c4;border-radius:2px"></div>
<svg style="left:7.5px;top:496px" width="12" height="12" viewBox="0 0 12 12" ><path d="M2.6,6.2L5,8.6L9.4,3.4" stroke="#333" stroke-width="1.5" fill="none"/></svg>
<div class="a" style="left:7.5px;top:516px;width:11.8px;height:11.5px;background:#c4c4c4;border-radius:2px"></div>
<svg style="left:7.5px;top:516px" width="12" height="12" viewBox="0 0 12 12" ><path d="M2.6,6.2L5,8.6L9.4,3.4" stroke="#333" stroke-width="1.5" fill="none"/></svg>
<div class="a" style="left:24.5px;top:494.3px;font-size:12px;line-height:14.4px;color:#ebebeb;font-weight:400;white-space:nowrap;letter-spacing:-0.1px">角を拡大・縮小</div>
<div class="a" style="left:24.5px;top:514.3px;font-size:12px;line-height:14.4px;color:#ebebeb;font-weight:400;white-space:nowrap;letter-spacing:-0.1px">線幅と効果を拡大・縮小</div>
</div>
<div class="panel" style="left:1198px;top:224px;width:20px;height:670px;box-shadow:0 0 0 0.6px rgba(25,25,25,.6),0 2px 9px rgba(0,0,0,.4);border-radius:4px 0 0 0;">
<div class="a" style="left:0px;top:0px;width:20px;height:13px;background:#3b3b3b;"></div>
<svg style="left:3.3px;top:3.5px" width="8" height="8" viewBox="0 0 8 8" ><path d="M1.2000000000000002,1.2000000000000002L6.8,6.8M6.8,1.2000000000000002L1.2000000000000002,6.8" stroke="#cfcfcf" stroke-width="1.2" fill="none"/></svg>
<div class="a" style="left:0px;top:13px;width:20px;height:13.5px;background:#474747;"></div>
<div class="a" style="left:0px;top:26.5px;width:20px;height:455.5px;background:#474747;"></div>
<div class="a" style="left:5px;top:80px;width:15px;height:396px;background:#464646;border:1px solid #505050"></div>
<div class="a" style="left:5.5px;top:482.8px;font-size:12.5px;line-height:15.0px;color:#dcdcdc;font-weight:400;white-space:nowrap;">2</div>
<div class="a" style="left:0px;top:500.5px;width:20px;height:1.0px;background:#3f3f3f;"></div>
<div class="a" style="left:0px;top:508px;width:20px;height:1px;background:#3f3f3f;"></div>
<div class="a" style="left:0px;top:509px;width:20px;height:167px;background:#464646;"></div>
<div class="a" style="left:4px;top:509px;width:1px;height:167px;background:#444;"></div>
</div>
<div class="panel" style="left:848.5px;top:540px;width:249px;height:216px;box-shadow:0 0 0 0.6px rgba(25,25,25,.6),0 2px 9px rgba(0,0,0,.4);border-radius:4px 0 0 0;">
<div class="a" style="left:0.0px;top:0px;width:249.0px;height:13.8px;background:#3b3b3b;"></div>
<svg style="left:4.3px;top:3.8px" width="8" height="8" viewBox="0 0 8 8" ><path d="M1.2000000000000002,1.2000000000000002L6.8,6.8M6.8,1.2000000000000002L1.2000000000000002,6.8" stroke="#cfcfcf" stroke-width="1.2" fill="none"/></svg>
<svg style="left:4.5px;top:23.8px" width="6" height="10" viewBox="0 0 6 10" ><path d="M1,3.8L3,1.8L5,3.8M1,6.2L3,8.2L5,6.2" stroke="#9a9a9a" stroke-width="1" fill="none"/></svg>
<div class="a" style="left:16.0px;top:22.1px;font-size:10.8px;line-height:12.96px;color:#f2f2f2;font-weight:700;white-space:nowrap;">カラー</div>
<svg style="left:5.0px;top:47px" width="14" height="13" viewBox="0 0 14 13" ><rect x="4.2" y="4" width="7" height="7" fill="#111" stroke="#fff" stroke-width="1.3"/><rect x="0.9" y="0.9" width="7" height="7" fill="#fff" stroke="#111" stroke-width="1"/><rect x="2.6" y="2.6" width="3.6" height="3.6" fill="#111"/></svg>
<svg style="left:25.5px;top:46px" width="12" height="14" viewBox="0 0 12 14" ><path d="M2,6.5C2,3 5,2 7,3.5L9.5,6.5V11" stroke="#e8e8e8" stroke-width="1.5" fill="none"/><path d="M0.3,5.2L2.2,1.4L4.6,5Z" fill="#e8e8e8"/><path d="M7.2,9.6L9.5,13L11.8,9.6Z" fill="#e8e8e8"/></svg>
<svg style="left:15.5px;top:75px" width="20" height="20" viewBox="0 0 20 20" ><rect x="0.75" y="0.75" width="18" height="18" fill="#fff" stroke="#fff"/><rect x="5.5" y="5.5" width="8.5" height="8.5" fill="#2a2a2a"/><path d="M0.5,19L19,0.5" stroke="#e0201c" stroke-width="1.6"/></svg>
<svg style="left:5.5px;top:65.3px" width="20" height="20" viewBox="0 0 20 20" ><rect x="1" y="1" width="17.2" height="17.2" fill="#000" stroke="#fff" stroke-width="1.3"/></svg>
<div class="a" style="left:51.0px;top:53.5px;font-size:12.5px;line-height:15.0px;color:#e0e0e0;font-weight:400;white-space:nowrap;">C</div>
<div class="a" style="left:71.5px;top:58.4px;width:111px;height:3.0px;background:#000;"></div>
<svg style="left:177.5px;top:61px" width="10" height="9" viewBox="0 0 10 9" ><path d="M5,0.3L9.6,5V8.6H0.4V5Z" fill="#c9c9c9"/></svg>
<div class="a" style="left:191.0px;top:50.3px;width:34.3px;height:19.5px;background:#3c3c3c;border:1px solid #575757;border-radius:1.5px"></div>
<div class="a" style="left:197.0px;top:53.73px;font-size:14.2px;line-height:17.04px;color:#ececec;font-weight:400;white-space:nowrap;transform:scaleX(0.94);transform-origin:left center">100</div>
<div class="a" style="left:229.0px;top:53.8px;font-size:12.5px;line-height:15.0px;color:#e0e0e0;font-weight:400;white-space:nowrap;">%</div>
<div class="a" style="left:51.0px;top:79.0px;font-size:12.5px;line-height:15.0px;color:#e0e0e0;font-weight:400;white-space:nowrap;">M</div>
<div class="a" style="left:71.5px;top:83.9px;width:111px;height:3.0px;background:#000;"></div>
<svg style="left:177.5px;top:86.5px" width="10" height="9" viewBox="0 0 10 9" ><path d="M5,0.3L9.6,5V8.6H0.4V5Z" fill="#c9c9c9"/></svg>
<div class="a" style="left:191.0px;top:75.8px;width:34.3px;height:19.5px;background:#3c3c3c;border:1px solid #575757;border-radius:1.5px"></div>
<div class="a" style="left:197.0px;top:79.23px;font-size:14.2px;line-height:17.04px;color:#ececec;font-weight:400;white-space:nowrap;transform:scaleX(0.94);transform-origin:left center">100</div>
<div class="a" style="left:229.0px;top:79.3px;font-size:12.5px;line-height:15.0px;color:#e0e0e0;font-weight:400;white-space:nowrap;">%</div>
<div class="a" style="left:51.0px;top:103.0px;font-size:12.5px;line-height:15.0px;color:#e0e0e0;font-weight:400;white-space:nowrap;">Y</div>
<div class="a" style="left:71.5px;top:107.9px;width:111px;height:3.0px;background:#000;"></div>
<svg style="left:177.5px;top:110.5px" width="10" height="9" viewBox="0 0 10 9" ><path d="M5,0.3L9.6,5V8.6H0.4V5Z" fill="#c9c9c9"/></svg>
<div class="a" style="left:191.0px;top:99.8px;width:34.3px;height:19.5px;background:#3c3c3c;border:1px solid #575757;border-radius:1.5px"></div>
<div class="a" style="left:197.0px;top:103.23px;font-size:14.2px;line-height:17.04px;color:#ececec;font-weight:400;white-space:nowrap;transform:scaleX(0.94);transform-origin:left center">100</div>
<div class="a" style="left:229.0px;top:103.3px;font-size:12.5px;line-height:15.0px;color:#e0e0e0;font-weight:400;white-space:nowrap;">%</div>
<div class="a" style="left:51.0px;top:128.5px;font-size:12.5px;line-height:15.0px;color:#e0e0e0;font-weight:400;white-space:nowrap;">K</div>
<div class="a" style="left:71.5px;top:133.4px;width:111px;height:3.0px;background:linear-gradient(90deg,#2a3a3c,#000 60%);"></div>
<svg style="left:177.5px;top:136px" width="10" height="9" viewBox="0 0 10 9" ><path d="M5,0.3L9.6,5V8.6H0.4V5Z" fill="#c9c9c9"/></svg>
<div class="a" style="left:191.0px;top:125.3px;width:34.3px;height:19.5px;background:#3c3c3c;border:1px solid #575757;border-radius:1.5px"></div>
<div class="a" style="left:197.0px;top:128.73px;font-size:14.2px;line-height:17.04px;color:#ececec;font-weight:400;white-space:nowrap;transform:scaleX(0.94);transform-origin:left center">100</div>
<div class="a" style="left:229.0px;top:128.8px;font-size:12.5px;line-height:15.0px;color:#e0e0e0;font-weight:400;white-space:nowrap;">%</div>
<svg style="left:6.0px;top:155.7px" width="40" height="13" viewBox="0 0 40 13" ><rect x="0" y="0" width="13" height="12.3" fill="#fff"/><path d="M0.3,12L12.7,0.3" stroke="#e0201c" stroke-width="1.5"/><rect x="13" y="0" width="13" height="12.3" fill="#000"/><rect x="26" y="0" width="12.5" height="12.3" fill="#fff"/></svg>
<div class="a" style="left:149.5px;top:157px;font-size:12.5px;line-height:15.0px;color:#e4e4e4;font-weight:400;white-space:nowrap;border-bottom:1px dotted #ccc;line-height:13.5px">#</div>
<div class="a" style="left:159.5px;top:153px;width:72px;height:19px;background:#3c3c3c;border:1px solid #575757;border-radius:1.5px"></div>
<div class="a" style="left:165.5px;top:156.18px;font-size:14.2px;line-height:17.04px;color:#ececec;font-weight:400;white-space:nowrap;transform:scaleX(0.94);transform-origin:left center">000000</div>
<div class="a" style="left:7.0px;top:180px;width:223.5px;height:20.5px;background:linear-gradient(180deg,rgba(255,255,255,.85) 0%,rgba(255,255,255,0) 38%,rgba(0,0,0,0) 52%,rgba(0,0,0,.95) 97%),linear-gradient(90deg,#e8121c 0%,#f08a12 9%,#f7ea1c 16%,#8cc63a 26%,#2aa84a 36%,#22aa9a 46%,#2aa6e0 54%,#2a4ea8 66%,#6a2e92 76%,#c01a82 86%,#e8124a 94%,#e8121c 100%);box-shadow:0 0 0 1px #3a3a3a"></div>
<div class="a" style="left:0.0px;top:207.8px;width:249.0px;height:1.0px;background:#3e3e3e;"></div>
<div class="a" style="left:0.0px;top:208.8px;width:249.0px;height:7.2px;background:#4a4a4a;"></div>
<svg style="left:113.5px;top:209.5px" width="20" height="6" viewBox="0 0 20 6" ><path d="M0.5,0V6" stroke="#3a3a3a" stroke-width="1"/><path d="M2.5,0V6" stroke="#3a3a3a" stroke-width="1"/><path d="M4.5,0V6" stroke="#3a3a3a" stroke-width="1"/><path d="M6.5,0V6" stroke="#3a3a3a" stroke-width="1"/><path d="M8.5,0V6" stroke="#3a3a3a" stroke-width="1"/><path d="M10.5,0V6" stroke="#3a3a3a" stroke-width="1"/><path d="M12.5,0V6" stroke="#3a3a3a" stroke-width="1"/><path d="M14.5,0V6" stroke="#3a3a3a" stroke-width="1"/><path d="M16.5,0V6" stroke="#3a3a3a" stroke-width="1"/><path d="M18.5,0V6" stroke="#3a3a3a" stroke-width="1"/></svg>
</div>
<div class="panel" style="left:885.5px;top:180px;width:256.7px;height:442.5px;box-shadow:0 0 0 0.6px rgba(25,25,25,.7),0 3px 12px rgba(0,0,0,.5);border-radius:4px 4px 0 0;">
<div class="a" style="left:0.0px;top:0px;width:257.5px;height:14px;background:#3b3b3b;"></div>
<svg style="left:4.5px;top:4.3px" width="8" height="8" viewBox="0 0 8 8" ><path d="M1.2999999999999998,1.2999999999999998L6.7,6.7M6.7,1.2999999999999998L1.2999999999999998,6.7" stroke="#cfcfcf" stroke-width="1.2" fill="none"/></svg>
<svg style="left:242.0px;top:4.5px" width="9" height="7" viewBox="0 0 9 7" ><path d="M3.6,0.6L1,3.3L3.6,6M7.4,0.6L4.8,3.3L7.4,6" stroke="#cfcfcf" stroke-width="1" fill="none"/></svg>
<div class="a" style="left:0.0px;top:14px;width:257.5px;height:27.3px;background:#393939;"></div>
<div class="a" style="left:0.0px;top:14px;width:45.8px;height:27.3px;background:#4a4a4a;"></div>
<svg style="left:4.7px;top:23.1px" width="6" height="10" viewBox="0 0 6 10" ><path d="M1,3.8L3,1.8L5,3.8M1,6.2L3,8.2L5,6.2" stroke="#9a9a9a" stroke-width="1" fill="none"/></svg>
<div class="a" style="left:15.5px;top:21.6px;font-size:10.8px;line-height:12.96px;color:#f2f2f2;font-weight:700;white-space:nowrap;">文字</div>
<svg style="left:240.5px;top:23.7px" width="10" height="8" viewBox="0 0 10 8" ><path d="M0,0.8H10M0,3.9H10M0,7H10" stroke="#cfcfcf" stroke-width="1.1" fill="none"/></svg>
<div class="a" style="left:6.25px;top:48px;width:244.25px;height:19px;background:#3c3c3c;border:1px solid #575757;border-radius:1.5px"></div>
<div class="a" style="left:233.0px;top:49px;width:1.0px;height:17px;background:#575757;"></div>
<svg style="left:237.85px;top:55.1px" width="8.4" height="5.4" viewBox="0 0 8.4 5.4" ><path d="M1,1L4.2,4.4L7.4,1" stroke="#dedede" stroke-width="1.25" fill="none"/></svg>
<div class="a" style="left:32.5px;top:51.66px;font-size:12.4px;line-height:14.88px;color:#ececec;font-weight:400;white-space:nowrap;">小塚ゴシック Pr6N</div>
<svg style="left:8.0px;top:51.5px" width="18" height="12" viewBox="0 0 18 12" ><circle cx="4" cy="4" r="3.2" stroke="#c8c8c8" stroke-width="1.1" fill="none"/><path d="M6.4,6.4L9.6,9.8" stroke="#c8c8c8" stroke-width="1.2"/><path d="M11,4.2L13.8,6.6L16.6,4.2" stroke="#c8c8c8" stroke-width="1" fill="none"/></svg>
<div class="a" style="left:6.25px;top:74.5px;width:244.25px;height:18.5px;background:#3c3c3c;border:1px solid #575757;border-radius:1.5px"></div>
<div class="a" style="left:233.0px;top:75.5px;width:1.0px;height:16.5px;background:#575757;"></div>
<svg style="left:237.85px;top:81.35px" width="8.4" height="5.4" viewBox="0 0 8.4 5.4" ><path d="M1,1L4.2,4.4L7.4,1" stroke="#dedede" stroke-width="1.25" fill="none"/></svg>
<div class="a" style="left:12.5px;top:77.43px;font-size:14.2px;line-height:17.04px;color:#ececec;font-weight:400;white-space:nowrap;transform:scaleX(0.94);transform-origin:left center">R</div>
<div class="a" style="left:6.25px;top:100px;width:244.25px;height:1px;background:#3f3f3f"></div>
<div class="a" style="left:6.25px;top:101px;width:244.25px;height:1px;background:#515151"></div>
<div class="a" style="left:5.0px;top:108.5px;font-size:17.5px;line-height:21.0px;color:#cdcdcd;font-weight:700;white-space:nowrap;font-family:'Liberation Serif',serif;line-height:18px;letter-spacing:-0.5px"><span style="font-size:11.5px;font-weight:700">T</span><span style="font-size:17.5px;font-weight:700">T</span></div>
<div class="a" style="left:29.5px;top:107px;width:192px;height:21.8px;background:#3c3c3c;border:1px solid #575757;border-radius:1.5px"></div>
<div class="a" style="left:50.5px;top:112.3px;font-size:12px;line-height:14.4px;color:#ececec;font-weight:400;white-space:nowrap;">仮想ボディ</div>
<svg style="left:208.6px;top:115.6px" width="8.4" height="5.4" viewBox="0 0 8.4 5.4" ><path d="M1,1L4.2,4.4L7.4,1" stroke="#dedede" stroke-width="1.25" fill="none"/></svg>
<svg style="left:33.0px;top:110.5px" width="13" height="15" viewBox="0 0 13 15" ><path d="M0,0.6H12.5M0,14H12.5" stroke="#a8a8a8" stroke-width="1"/><text x="6.25" y="11.8" font-size="12.5" text-anchor="middle" fill="#bdbdbd" font-family="Liberation Sans,sans-serif">M</text></svg>
<svg style="left:231.0px;top:110px" width="16" height="16" viewBox="0 0 16 16" ><circle cx="8" cy="8" r="6.4" stroke="#dcdcdc" stroke-width="1.2" fill="none"/><circle cx="8" cy="4.9" r="1" fill="#dcdcdc"/><path d="M6.7,7.2H8.6V11.2M6.5,11.3H10" stroke="#dcdcdc" stroke-width="1.2" fill="none"/></svg>
<div class="a" style="left:6.25px;top:136px;width:244.25px;height:1px;background:#3f3f3f"></div>
<div class="a" style="left:6.25px;top:137px;width:244.25px;height:1px;background:#515151"></div>
<svg style="left:6.5px;top:145px" width="17" height="16" viewBox="0 0 17 16" ><path d="M0,0.6H16M0,15.4H16" stroke="#a8a8a8" stroke-width="1"/><text x="8" y="13.3" font-size="15" text-anchor="middle" fill="#c4c4c4" font-family="Liberation Sans,sans-serif" transform="translate(8 0) scale(0.92 1) translate(-8 0)">M</text></svg>
<div class="a" style="left:27.0px;top:142.5px;width:92.5px;height:19.5px;background:#3c3c3c;border:1px solid #575757;border-radius:1.5px"></div>
<div class="a" style="left:45.25px;top:143.5px;width:1.0px;height:17.5px;background:#575757;"></div>
<svg style="left:32.42px;top:145.25px" width="8" height="14" viewBox="0 0 8 14" ><path d="M1,4.3L4,1.1L7,4.3M1,9.7L4,12.9L7,9.7" stroke="#d8d8d8" stroke-width="1.2" fill="none"/></svg>
<div class="a" style="left:102.0px;top:143.5px;width:1.0px;height:17.5px;background:#575757;"></div>
<svg style="left:106.85px;top:149.85px" width="8.4" height="5.4" viewBox="0 0 8.4 5.4" ><path d="M1,1L4.2,4.4L7.4,1" stroke="#dedede" stroke-width="1.25" fill="none"/></svg>
<div class="a" style="left:49.5px;top:145.93px;font-size:14.2px;line-height:17.04px;color:#ececec;font-weight:400;white-space:nowrap;transform:scaleX(0.94);transform-origin:left center">12 pt</div>
<svg style="left:136.5px;top:144px" width="18" height="18" viewBox="0 0 18 18" ><path d="M2.5,6V17M0.6,8L2.5,5.8L4.4,8M0.6,15L2.5,17.2L4.4,15" stroke="#c8c8c8" stroke-width="1" fill="none"/><text x="11.5" y="7.6" font-size="8.5" text-anchor="middle" fill="#c8c8c8" font-family="Liberation Sans,sans-serif">A</text><text x="11.5" y="16.6" font-size="8.5" text-anchor="middle" fill="#c8c8c8" font-family="Liberation Sans,sans-serif">A</text><path d="M6.5,8.6H16.5M6.5,17.6H16.5" stroke="#c8c8c8" stroke-width="0.9"/></svg>
<div class="a" style="left:158.25px;top:142.5px;width:92.25px;height:19.5px;background:#3c3c3c;border:1px solid #575757;border-radius:1.5px"></div>
<div class="a" style="left:175.5px;top:143.5px;width:1px;height:17.5px;background:#575757;"></div>
<svg style="left:163.17px;top:145.25px" width="8" height="14" viewBox="0 0 8 14" ><path d="M1,4.3L4,1.1L7,4.3M1,9.7L4,12.9L7,9.7" stroke="#d8d8d8" stroke-width="1.2" fill="none"/></svg>
<div class="a" style="left:233.0px;top:143.5px;width:1.0px;height:17.5px;background:#575757;"></div>
<svg style="left:237.85px;top:149.85px" width="8.4" height="5.4" viewBox="0 0 8.4 5.4" ><path d="M1,1L4.2,4.4L7.4,1" stroke="#dedede" stroke-width="1.25" fill="none"/></svg>
<div class="a" style="left:180.0px;top:145.93px;font-size:14.2px;line-height:17.04px;color:#ececec;font-weight:400;white-space:nowrap;transform:scaleX(0.94);transform-origin:left center">(21 pt)</div>
<svg style="left:5.0px;top:170px" width="20" height="19" viewBox="0 0 20 19" ><path d="M3,2V17M1,4.2L3,2L5,4.2M1,14.8L3,17L5,14.8" stroke="#c8c8c8" stroke-width="1.1" fill="none"/><text x="13" y="16.6" font-size="19" text-anchor="middle" fill="#cdcdcd" font-family="Liberation Serif,serif">T</text></svg>
<div class="a" style="left:27.0px;top:169.0px;width:92.5px;height:19.5px;background:#3c3c3c;border:1px solid #575757;border-radius:1.5px"></div>
<div class="a" style="left:45.25px;top:170.0px;width:1.0px;height:17.5px;background:#575757;"></div>
<svg style="left:32.42px;top:171.75px" width="8" height="14" viewBox="0 0 8 14" ><path d="M1,4.3L4,1.1L7,4.3M1,9.7L4,12.9L7,9.7" stroke="#d8d8d8" stroke-width="1.2" fill="none"/></svg>
<div class="a" style="left:102.0px;top:170.0px;width:1.0px;height:17.5px;background:#575757;"></div>
<svg style="left:106.85px;top:176.35px" width="8.4" height="5.4" viewBox="0 0 8.4 5.4" ><path d="M1,1L4.2,4.4L7.4,1" stroke="#dedede" stroke-width="1.25" fill="none"/></svg>
<div class="a" style="left:49.5px;top:172.43px;font-size:14.2px;line-height:17.04px;color:#ececec;font-weight:400;white-space:nowrap;transform:scaleX(0.94);transform-origin:left center">100%</div>
<svg style="left:135.5px;top:169px" width="20" height="21" viewBox="0 0 20 21" ><text x="10" y="13.8" font-size="17.5" font-weight="700" text-anchor="middle" fill="#cdcdcd" font-family="Liberation Serif,serif">T</text><path d="M1.5,18H18.5M3.6,16L1.4,18L3.6,20M16.4,16L18.6,18L16.4,20" stroke="#c8c8c8" stroke-width="1.1" fill="none"/></svg>
<div class="a" style="left:158.25px;top:169.0px;width:92.25px;height:19.5px;background:#3c3c3c;border:1px solid #575757;border-radius:1.5px"></div>
<div class="a" style="left:175.5px;top:170.0px;width:1px;height:17.5px;background:#575757;"></div>
<svg style="left:163.17px;top:171.75px" width="8" height="14" viewBox="0 0 8 14" ><path d="M1,4.3L4,1.1L7,4.3M1,9.7L4,12.9L7,9.7" stroke="#d8d8d8" stroke-width="1.2" fill="none"/></svg>
<div class="a" style="left:233.0px;top:170.0px;width:1.0px;height:17.5px;background:#575757;"></div>
<svg style="left:237.85px;top:176.35px" width="8.4" height="5.4" viewBox="0 0 8.4 5.4" ><path d="M1,1L4.2,4.4L7.4,1" stroke="#dedede" stroke-width="1.25" fill="none"/></svg>
<div class="a" style="left:180.0px;top:172.43px;font-size:14.2px;line-height:17.04px;color:#ececec;font-weight:400;white-space:nowrap;transform:scaleX(0.94);transform-origin:left center">100%</div>
<svg style="left:5.0px;top:196px" width="20" height="20" viewBox="0 0 20 20" ><text x="0" y="11.5" font-size="12.5" fill="#c8c8c8" font-family="Liberation Sans,sans-serif" letter-spacing="-1.2">V/A</text><path d="M17,16H5M7.2,14L5,16L7.2,18" stroke="#c8c8c8" stroke-width="1.1" fill="none"/></svg>
<div class="a" style="left:27.0px;top:195.0px;width:92.5px;height:19.5px;background:#3c3c3c;border:1px solid #575757;border-radius:1.5px"></div>
<div class="a" style="left:45.25px;top:196.0px;width:1.0px;height:17.5px;background:#575757;"></div>
<svg style="left:32.42px;top:197.75px" width="8" height="14" viewBox="0 0 8 14" ><path d="M1,4.3L4,1.1L7,4.3M1,9.7L4,12.9L7,9.7" stroke="#d8d8d8" stroke-width="1.2" fill="none"/></svg>
<div class="a" style="left:102.0px;top:196.0px;width:1.0px;height:17.5px;background:#575757;"></div>
<svg style="left:106.85px;top:202.35px" width="8.4" height="5.4" viewBox="0 0 8.4 5.4" ><path d="M1,1L4.2,4.4L7.4,1" stroke="#dedede" stroke-width="1.25" fill="none"/></svg>
<svg style="left:136.0px;top:196px" width="19" height="20" viewBox="0 0 19 20" ><rect x="0.5" y="0.5" width="17.5" height="11" fill="#bdbdbd"/><text x="9.3" y="10" font-size="11.5" font-weight="700" text-anchor="middle" fill="#4a4a4a" font-family="Liberation Serif,serif" letter-spacing="-0.8">VA</text><path d="M1,16H17.5M3.2,14L1,16L3.2,18M15.3,14L17.5,16L15.3,18" stroke="#c8c8c8" stroke-width="1.1" fill="none"/></svg>
<div class="a" style="left:158.25px;top:195.0px;width:92.25px;height:19.5px;background:#3c3c3c;border:1px solid #575757;border-radius:1.5px"></div>
<div class="a" style="left:175.5px;top:196.0px;width:1px;height:17.5px;background:#575757;"></div>
<svg style="left:163.17px;top:197.75px" width="8" height="14" viewBox="0 0 8 14" ><path d="M1,4.3L4,1.1L7,4.3M1,9.7L4,12.9L7,9.7" stroke="#d8d8d8" stroke-width="1.2" fill="none"/></svg>
<div class="a" style="left:233.0px;top:196.0px;width:1.0px;height:17.5px;background:#575757;"></div>
<svg style="left:237.85px;top:202.35px" width="8.4" height="5.4" viewBox="0 0 8.4 5.4" ><path d="M1,1L4.2,4.4L7.4,1" stroke="#dedede" stroke-width="1.25" fill="none"/></svg>
<div class="a" style="left:180.0px;top:198.43px;font-size:14.2px;line-height:17.04px;color:#ececec;font-weight:400;white-space:nowrap;transform:scaleX(0.94);transform-origin:left center">0</div>
<div class="a" style="left:6.25px;top:219.5px;width:244.25px;height:1px;background:#3f3f3f"></div>
<div class="a" style="left:6.25px;top:220.5px;width:244.25px;height:1px;background:#515151"></div>
<svg style="left:6.0px;top:229.5px" width="18" height="18" viewBox="0 0 18 18" ><text x="8.6" y="9.6" font-size="9.5" text-anchor="middle" fill="#c8c8c8" font-family="Noto Sans CJK JP,sans-serif">あ</text><path d="M3,0.5V9.5M14.5,0.5V9.5" stroke="#bdbdbd" stroke-width="0.9" stroke-dasharray="1 1"/><path d="M3,0.5H14.5" stroke="#bdbdbd" stroke-width="0.9" stroke-dasharray="1 1"/><path d="M0,14.5H5.5M3.6,12.7L5.6,14.5L3.6,16.3M17.5,14.5H12M13.9,12.7L11.9,14.5L13.9,16.3" stroke="#c8c8c8" stroke-width="1" fill="none"/></svg>
<div class="a" style="left:27.0px;top:227.0px;width:92.5px;height:19.5px;background:#3c3c3c;border:1px solid #575757;border-radius:1.5px"></div>
<div class="a" style="left:45.25px;top:228.0px;width:1.0px;height:17.5px;background:#575757;"></div>
<svg style="left:32.42px;top:229.75px" width="8" height="14" viewBox="0 0 8 14" ><path d="M1,4.3L4,1.1L7,4.3M1,9.7L4,12.9L7,9.7" stroke="#d8d8d8" stroke-width="1.2" fill="none"/></svg>
<div class="a" style="left:102.0px;top:228.0px;width:1.0px;height:17.5px;background:#575757;"></div>
<svg style="left:106.85px;top:234.35px" width="8.4" height="5.4" viewBox="0 0 8.4 5.4" ><path d="M1,1L4.2,4.4L7.4,1" stroke="#dedede" stroke-width="1.25" fill="none"/></svg>
<div class="a" style="left:49.5px;top:230.43px;font-size:14.2px;line-height:17.04px;color:#ececec;font-weight:400;white-space:nowrap;transform:scaleX(0.94);transform-origin:left center">0%</div>
<svg style="left:6.0px;top:255.5px" width="18" height="18" viewBox="0 0 18 18" ><text x="8.6" y="9.6" font-size="9.5" text-anchor="middle" fill="#c8c8c8" font-family="Noto Sans CJK JP,sans-serif">あ</text><path d="M3,0.5V9.5M14.5,0.5V9.5" stroke="#bdbdbd" stroke-width="0.9" stroke-dasharray="1 1"/><path d="M3,0.5H14.5" stroke="#bdbdbd" stroke-width="0.9" stroke-dasharray="1 1"/><path d="M0,15H7M5,13.2L7,15L5,16.8" stroke="#c8c8c8" stroke-width="1" fill="none"/></svg>
<div class="a" style="left:27.0px;top:253.25px;width:92.5px;height:19.5px;background:#3c3c3c;border:1px solid #575757;border-radius:1.5px"></div>
<div class="a" style="left:34.5px;top:257.52px;font-size:11.8px;line-height:14.16px;color:#ececec;font-weight:400;white-space:nowrap;">自動</div>
<svg style="left:106.8px;top:260.75px" width="8.4" height="5.4" viewBox="0 0 8.4 5.4" ><path d="M1,1L4.2,4.4L7.4,1" stroke="#dedede" stroke-width="1.25" fill="none"/></svg>
<svg style="left:136.5px;top:256px" width="18" height="18" viewBox="0 0 18 18" ><text x="8.6" y="9.6" font-size="9.5" text-anchor="middle" fill="#c8c8c8" font-family="Noto Sans CJK JP,sans-serif">あ</text><path d="M3,0.5V9.5M14.5,0.5V9.5" stroke="#bdbdbd" stroke-width="0.9" stroke-dasharray="1 1"/><path d="M3,0.5H14.5" stroke="#bdbdbd" stroke-width="0.9" stroke-dasharray="1 1"/><path d="M17.5,15H10.5M12.5,13.2L10.5,15L12.5,16.8" stroke="#c8c8c8" stroke-width="1" fill="none"/></svg>
<div class="a" style="left:158.25px;top:253.25px;width:92.25px;height:19.5px;background:#3c3c3c;border:1px solid #575757;border-radius:1.5px"></div>
<div class="a" style="left:165.5px;top:257.52px;font-size:11.8px;line-height:14.16px;color:#ececec;font-weight:400;white-space:nowrap;">自動</div>
<svg style="left:237.8px;top:260.75px" width="8.4" height="5.4" viewBox="0 0 8.4 5.4" ><path d="M1,1L4.2,4.4L7.4,1" stroke="#dedede" stroke-width="1.25" fill="none"/></svg>
<div class="a" style="left:6.25px;top:279.5px;width:244.25px;height:1px;background:#3f3f3f"></div>
<div class="a" style="left:6.25px;top:280.5px;width:244.25px;height:1px;background:#515151"></div>
<svg style="left:6.0px;top:289px" width="18" height="17" viewBox="0 0 18 17" ><text x="0" y="11" font-size="12.5" fill="#c8c8c8" font-family="Liberation Sans,sans-serif">A</text><text x="9" y="7.6" font-size="8.5" fill="#c8c8c8" font-family="Liberation Sans,sans-serif">a</text><path d="M0,12.6H15" stroke="#c8c8c8" stroke-width="1"/><path d="M12,16.5V10.5M10.2,12.4L12,10.3L13.8,12.4" stroke="#c8c8c8" stroke-width="1" fill="none"/></svg>
<div class="a" style="left:27.0px;top:286.5px;width:92.5px;height:19.5px;background:#3c3c3c;border:1px solid #575757;border-radius:1.5px"></div>
<div class="a" style="left:45.25px;top:287.5px;width:1.0px;height:17.5px;background:#575757;"></div>
<svg style="left:32.42px;top:289.25px" width="8" height="14" viewBox="0 0 8 14" ><path d="M1,4.3L4,1.1L7,4.3M1,9.7L4,12.9L7,9.7" stroke="#d8d8d8" stroke-width="1.2" fill="none"/></svg>
<div class="a" style="left:102.0px;top:287.5px;width:1.0px;height:17.5px;background:#575757;"></div>
<svg style="left:106.85px;top:293.85px" width="8.4" height="5.4" viewBox="0 0 8.4 5.4" ><path d="M1,1L4.2,4.4L7.4,1" stroke="#dedede" stroke-width="1.25" fill="none"/></svg>
<div class="a" style="left:49.5px;top:289.93px;font-size:14.2px;line-height:17.04px;color:#ececec;font-weight:400;white-space:nowrap;transform:scaleX(0.94);transform-origin:left center">0 pt</div>
<svg style="left:137.0px;top:288.5px" width="18" height="18" viewBox="0 0 18 18" ><path d="M13.2,2.6A7.3,7.3 0 1 0 16.2,8" stroke="#c8c8c8" stroke-width="1.1" fill="none"/><path d="M11,0.6L13.8,2.6L11.4,4.8" stroke="#c8c8c8" stroke-width="1.1" fill="none"/><text x="8.9" y="13" font-size="11.5" text-anchor="middle" fill="#cdcdcd" font-family="Liberation Serif,serif">T</text></svg>
<div class="a" style="left:158.25px;top:286.5px;width:92.25px;height:19.5px;background:#3c3c3c;border:1px solid #575757;border-radius:1.5px"></div>
<div class="a" style="left:175.5px;top:287.5px;width:1px;height:17.5px;background:#575757;"></div>
<svg style="left:163.17px;top:289.25px" width="8" height="14" viewBox="0 0 8 14" ><path d="M1,4.3L4,1.1L7,4.3M1,9.7L4,12.9L7,9.7" stroke="#d8d8d8" stroke-width="1.2" fill="none"/></svg>
<div class="a" style="left:233.0px;top:287.5px;width:1.0px;height:17.5px;background:#575757;"></div>
<svg style="left:237.85px;top:293.85px" width="8.4" height="5.4" viewBox="0 0 8.4 5.4" ><path d="M1,1L4.2,4.4L7.4,1" stroke="#dedede" stroke-width="1.25" fill="none"/></svg>
<div class="a" style="left:180.0px;top:289.93px;font-size:14.2px;line-height:17.04px;color:#ececec;font-weight:400;white-space:nowrap;transform:scaleX(0.94);transform-origin:left center">0°</div>
<div class="a" style="left:6.25px;top:313px;width:244.25px;height:1px;background:#3f3f3f"></div>
<div class="a" style="left:6.25px;top:314px;width:244.25px;height:1px;background:#515151"></div>
<div class="a" style="left:9.0px;top:317.5px;font-size:15.5px;line-height:18.6px;color:#cfcfcf;font-weight:400;white-space:nowrap;font-family:'Liberation Serif',serif;letter-spacing:0.3px">TT</div>
<div class="a" style="left:40.5px;top:317.5px;font-size:15.5px;line-height:18.6px;color:#cfcfcf;font-weight:400;white-space:nowrap;font-family:'Liberation Serif',serif;letter-spacing:0.3px">T<span style="font-size:11.5px">T</span></div>
<div class="a" style="left:107.5px;top:317.5px;font-size:15.5px;line-height:18.6px;color:#cfcfcf;font-weight:400;white-space:nowrap;font-family:'Liberation Serif',serif;letter-spacing:0.3px">T<span style="font-size:8px;position:relative;top:-6px">1</span></div>
<div class="a" style="left:137.0px;top:317.5px;font-size:15.5px;line-height:18.6px;color:#cfcfcf;font-weight:400;white-space:nowrap;font-family:'Liberation Serif',serif;letter-spacing:0.3px">T<span style="font-size:8px;position:relative;top:1.5px">1</span></div>
<div class="a" style="left:206.0px;top:317.5px;font-size:15.5px;line-height:18.6px;color:#cfcfcf;font-weight:400;white-space:nowrap;font-family:'Liberation Serif',serif;letter-spacing:0.3px"><span style="border-bottom:1.2px solid #cfcfcf;display:inline-block;line-height:15.5px">T</span></div>
<div class="a" style="left:234.5px;top:317.5px;font-size:15.5px;line-height:18.6px;color:#cfcfcf;font-weight:400;white-space:nowrap;font-family:'Liberation Serif',serif;letter-spacing:0.3px">T</div>
<div class="a" style="left:233.8px;top:325.2px;width:11.4px;height:1.2px;background:#cfcfcf;"></div>
<div class="a" style="left:6.25px;top:339.5px;width:244.25px;height:1px;background:#3f3f3f"></div>
<div class="a" style="left:6.25px;top:340.5px;width:244.25px;height:1px;background:#515151"></div>
<div class="a" style="left:6.25px;top:346px;width:113.25px;height:19px;background:#3c3c3c;border:1px solid #575757;border-radius:1.5px"></div>
<div class="a" style="left:12.5px;top:349.9px;font-size:12px;line-height:14.4px;color:#ececec;font-weight:400;white-space:nowrap;">英語 : 米国</div>
<svg style="left:106.8px;top:353.3px" width="8.4" height="5.4" viewBox="0 0 8.4 5.4" ><path d="M1,1L4.2,4.4L7.4,1" stroke="#dedede" stroke-width="1.25" fill="none"/></svg>
<div class="a" style="left:137.0px;top:347.5px;font-size:13px;line-height:15.6px;color:#c8c8c8;font-weight:400;white-space:nowrap;"><span style="font-size:9.5px;vertical-align:4px">a</span><span style="font-size:13px">a</span></div>
<div class="a" style="left:158.25px;top:346px;width:92.25px;height:19px;background:#3c3c3c;border:1px solid #575757;border-radius:1.5px"></div>
<div class="a" style="left:165.5px;top:350.02px;font-size:11.8px;line-height:14.16px;color:#ececec;font-weight:400;white-space:nowrap;">シャープ</div>
<svg style="left:237.8px;top:353.3px" width="8.4" height="5.4" viewBox="0 0 8.4 5.4" ><path d="M1,1L4.2,4.4L7.4,1" stroke="#dedede" stroke-width="1.25" fill="none"/></svg>
<div class="a" style="left:6.25px;top:372px;width:244.25px;height:1px;background:#3f3f3f"></div>
<div class="a" style="left:6.25px;top:373px;width:244.25px;height:1px;background:#515151"></div>
<div class="a" style="left:6.0px;top:383px;font-size:11.7px;line-height:14.04px;color:#cdcdcd;font-weight:400;white-space:nowrap;">グリフにスナップ</div>
<svg style="left:196.5px;top:383px" width="18" height="14" viewBox="0 0 18 14" ><rect x="0.5" y="0.5" width="9.6" height="11.6" stroke="#cdcdcd" stroke-width="1" fill="none"/><text x="5.3" y="10.5" font-size="10.5" text-anchor="middle" fill="#cdcdcd" font-family="Liberation Sans,sans-serif">A</text><text x="10.6" y="10.8" font-size="11" fill="#cdcdcd" font-family="Liberation Sans,sans-serif">g</text></svg>
<svg style="left:231.0px;top:382px" width="16" height="16" viewBox="0 0 16 16" ><circle cx="8" cy="8" r="6.4" stroke="#dcdcdc" stroke-width="1.2" fill="none"/><circle cx="8" cy="4.9" r="1" fill="#dcdcdc"/><path d="M6.7,7.2H8.6V11.2M6.5,11.3H10" stroke="#dcdcdc" stroke-width="1.2" fill="none"/></svg>
<svg style="left:10.0px;top:417px" width="16" height="16" viewBox="0 0 16 16" ><rect x="0.5" y="0.5" width="14.5" height="14.5" stroke="#6e6e6e" stroke-width="1" fill="none"/><text x="7.8" y="12" font-size="10.5" text-anchor="middle" fill="#6e6e6e" font-family="Noto Sans CJK JP,sans-serif">あ</text></svg>
<svg style="left:46.5px;top:417px" width="16" height="16" viewBox="0 0 16 16" ><rect x="0.5" y="0.5" width="14.5" height="14.5" stroke="#6e6e6e" stroke-width="1" fill="none"/><text x="7.8" y="12" font-size="10.5" text-anchor="middle" fill="#6e6e6e" font-family="Noto Sans CJK JP,sans-serif">あ</text><path d="M-1,7.5H17" stroke="#6e6e6e" stroke-width="1"/></svg>
<svg style="left:87.0px;top:416px" width="19" height="19" viewBox="0 0 19 19" ><rect x="0.5" y="0.5" width="17.5" height="16.5" stroke="#6e6e6e" stroke-width="1" fill="none"/><rect x="2.5" y="2.5" width="8.5" height="11" stroke="#6e6e6e" stroke-width="0.9" fill="none"/><text x="3" y="12.8" font-size="11.5" fill="#6e6e6e" font-family="Liberation Sans,sans-serif">Ag</text></svg>
<div class="a" style="left:126.5px;top:412.5px;width:26px;height:24.5px;background:#444444;border-radius:2px"></div>
<svg style="left:129.5px;top:417px" width="22" height="16" viewBox="0 0 22 16" ><text x="0.5" y="12" font-size="14" fill="#6e6e6e" font-family="Liberation Sans,sans-serif">Ax</text><path d="M0,14.4H20" stroke="#6e6e6e" stroke-width="1"/></svg>
<div class="a" style="left:170.5px;top:412px;width:1px;height:26px;background:#484848;"></div>
<div class="a" style="left:190.5px;top:412.5px;width:25px;height:24.5px;background:#444444;border-radius:2px"></div>
<svg style="left:194.5px;top:417px" width="20" height="18" viewBox="0 0 20 18" ><text x="0" y="13" font-size="15" fill="#6e6e6e" font-family="Liberation Sans,sans-serif">A</text><path d="M10.5,1L16.5,16" stroke="#6e6e6e" stroke-width="1.1"/></svg>
<div class="a" style="left:225.5px;top:412.5px;width:25px;height:24.5px;background:#444444;border-radius:2px"></div>
<svg style="left:231.5px;top:416px" width="14" height="18" viewBox="0 0 14 18" ><text x="0" y="14" font-size="14" fill="#6e6e6e" font-family="Liberation Sans,sans-serif">A</text><circle cx="7.5" cy="2.6" r="1.5" stroke="#6e6e6e" stroke-width="0.9" fill="none"/></svg>
</div>
</body></html>
